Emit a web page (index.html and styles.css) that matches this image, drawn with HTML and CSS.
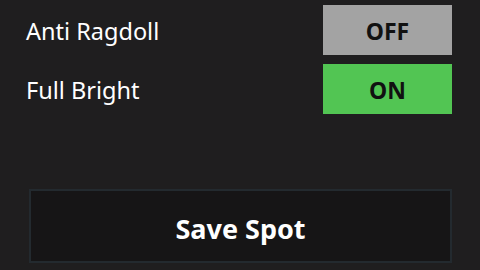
FILE: index.html
```html
<!DOCTYPE html>
<html>
<head>
<meta charset="utf-8">
<link rel="stylesheet" href="styles.css">
</head>
<body>
<div class="panel">
  <div class="row">
    <span class="label">Anti Ragdoll</span>
    <div class="toggle off">OFF</div>
  </div>
  <div class="row">
    <span class="label">Full Bright</span>
    <div class="toggle on">ON</div>
  </div>
  <div class="save">Save Spot</div>
</div>
</body>
</html>
```
FILE: styles.css
```css
html, body {
  margin: 0;
  padding: 0;
  width: 480px;
  height: 270px;
  overflow: hidden;
  background: #1f1e1f;
  font-family: "Noto Sans", "Open Sans", sans-serif;
}
.panel {
  display: flex;
  flex-direction: column;
  padding: 5px 28px 0 26px;
  gap: 9px;
}
.row {
  display: flex;
  justify-content: space-between;
  align-items: center;
  height: 50px;
}
.label {
  color: #ffffff;
  font-size: 23.5px;
  padding-top: 2px;
}
.toggle {
  width: 129px;
  height: 50px;
  display: flex;
  align-items: center;
  justify-content: center;
  font-weight: 700;
  font-size: 23px;
  color: #111111;
  padding-top: 2px;
  box-sizing: border-box;
}
.off { background: #a3a3a3; }
.on { background: #52c553; }
.save {
  margin: 66px 0 0 3px;
  height: 74px;
  padding-top: 4px;
  box-sizing: border-box;
  border: 2px solid #232a2f;
  background: #161516;
  color: #ffffff;
  font-weight: 700;
  font-size: 27px;
  display: flex;
  align-items: center;
  justify-content: center;
}
```
